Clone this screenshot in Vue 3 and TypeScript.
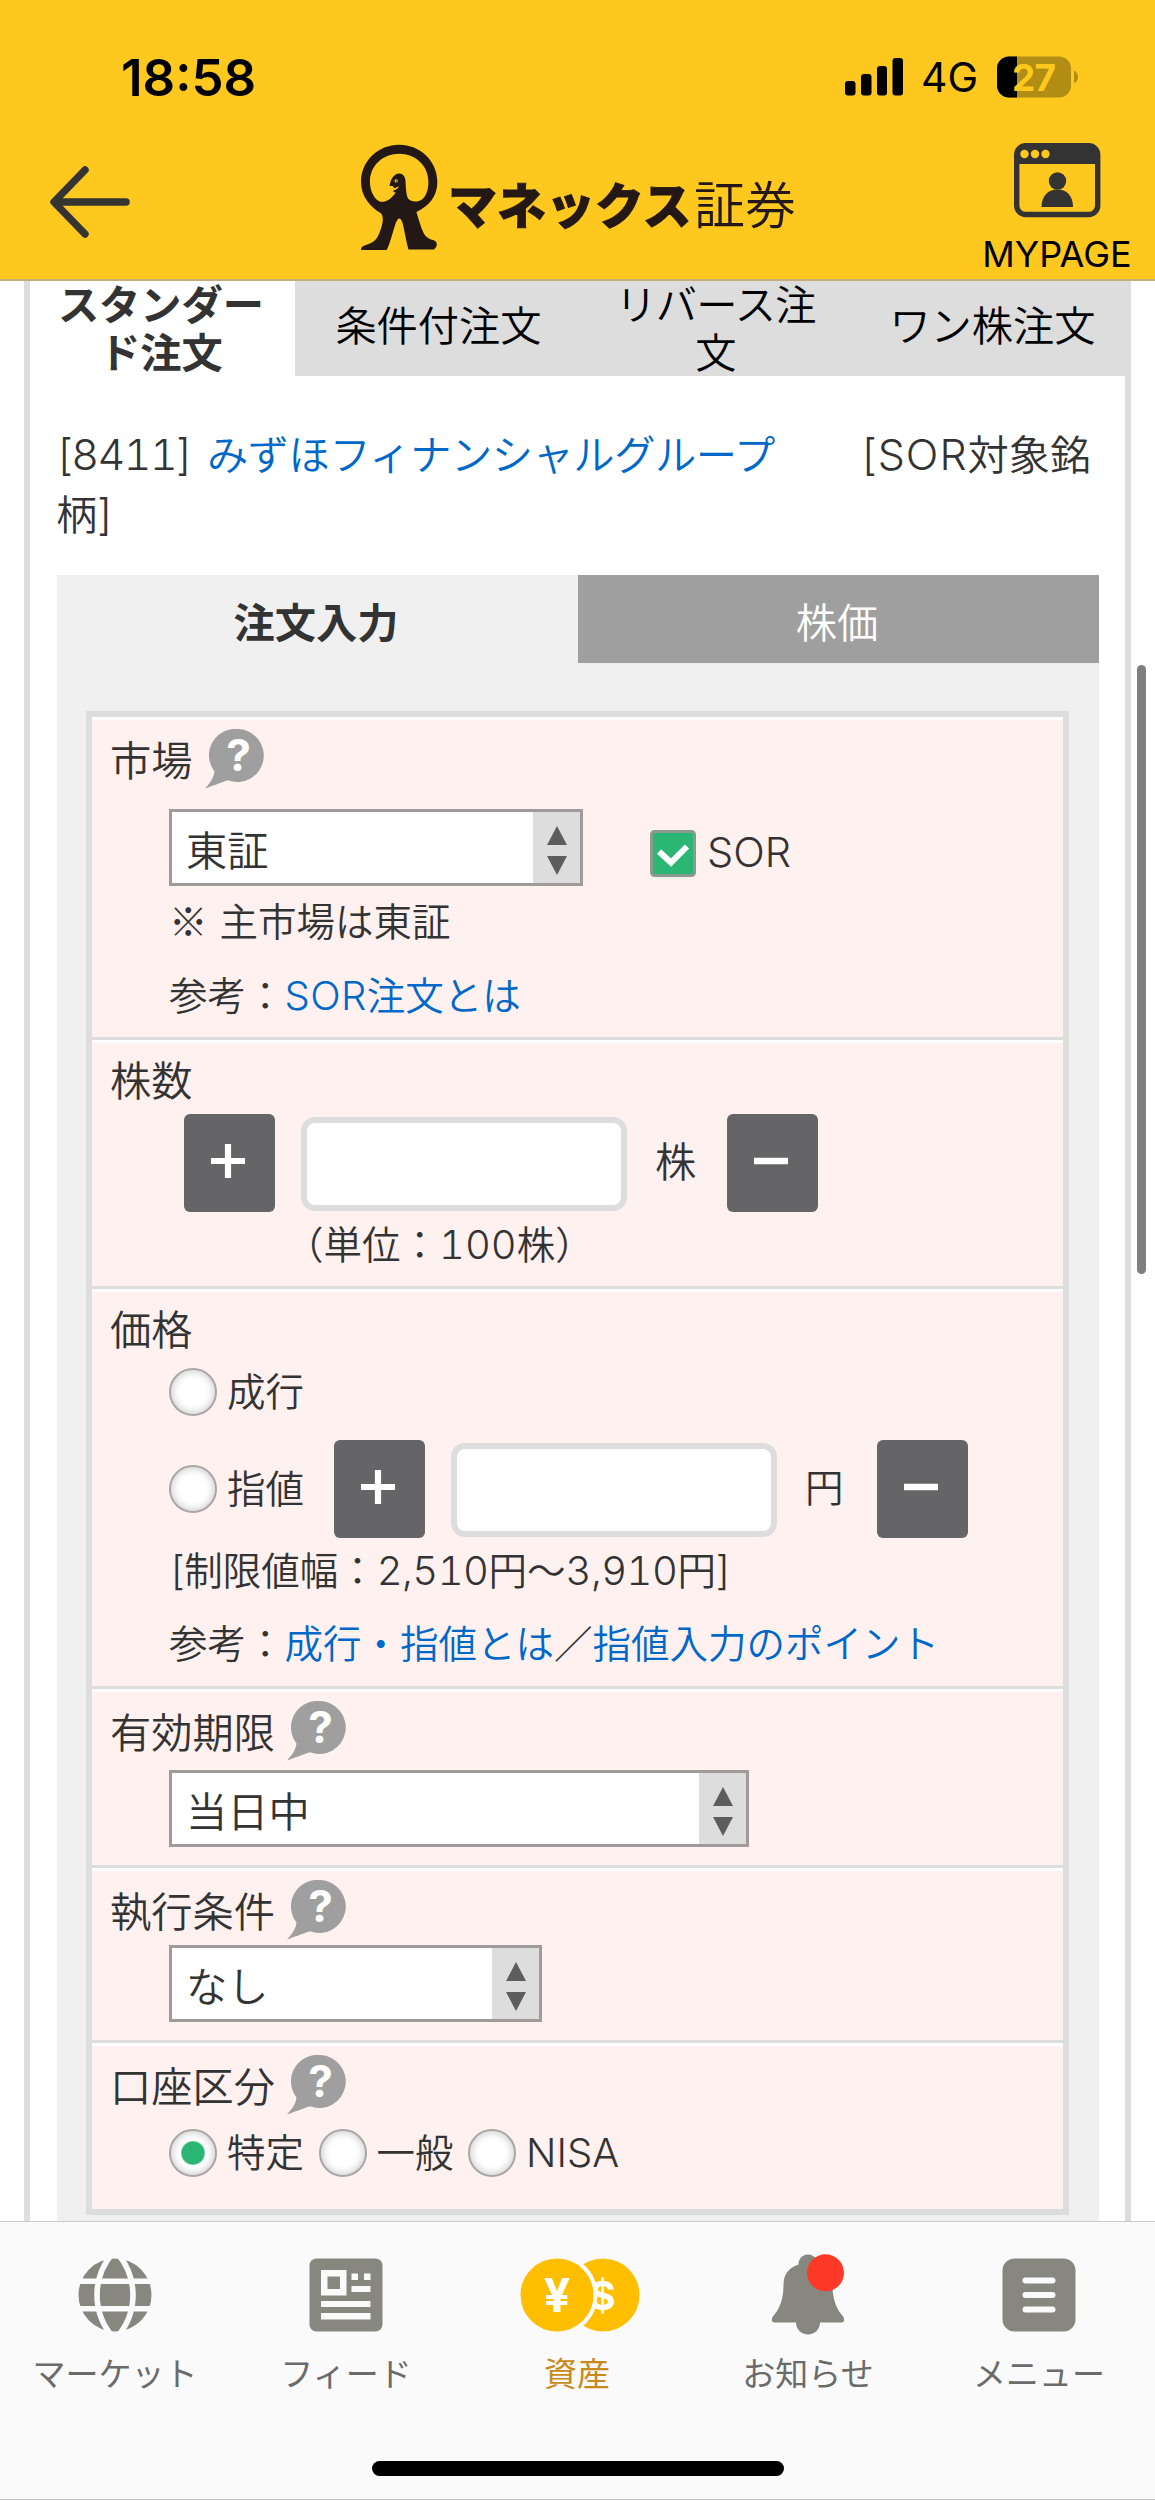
<script setup lang="ts">
import { ref, h } from 'vue'
import type { FunctionalComponent } from 'vue'

interface NavItem {
  id: string
  label: string
}

const orderTabs: string[][] = [['スタンダー', 'ド注文'], ['条件付注文'], ['リバース注', '文'], ['ワン株注文']]
const accounts: string[] = ['特定', '一般', 'NISA']
const navItems: NavItem[] = [
  { id: 'market', label: 'マーケット' },
  { id: 'feed', label: 'フィード' },
  { id: 'asset', label: '資産' },
  { id: 'notice', label: 'お知らせ' },
  { id: 'menu', label: 'メニュー' },
]

const activeTab = ref(0)
const account = ref('特定')
const activeNav = ref('asset')
const quantity = ref('')
const price = ref('')

const HelpIcon: FunctionalComponent = () =>
  h('svg', { width: 60, height: 60, viewBox: '0 0 60 60' }, [
    h('path', {
      fill: '#9f9f9f',
      d: 'M33.5 0A26.5 26.5 0 1 1 23 51.3C19 52.5 10 56 0 59.5C4 55 8.5 50 9.5 42.5A26.5 26.5 0 0 1 33.5 0Z',
    }),
    h(
      'text',
      {
        x: 33.5,
        y: 42,
        'text-anchor': 'middle',
        'font-family': 'Inter, sans-serif',
        'font-weight': 700,
        'font-size': 44,
        fill: '#fff',
      },
      '?',
    ),
  ])

const ArrowsIcon: FunctionalComponent = () =>
  h('svg', { width: 20, height: 49, viewBox: '0 0 20 49' }, [
    h('path', { d: 'M10 0L20 19H0ZM0 30H20L10 49Z', fill: '#5f5c5c' }),
  ])
</script>

<template>
  <div class="screen">
    <header class="header">
      <div class="status">
        <span class="time">18:58</span>
        <div class="status-right">
          <svg width="58" height="38" viewBox="0 0 58 38">
            <rect x="0" y="23" width="10.500" height="14.500" rx="3" />
            <rect x="16" y="16" width="10.500" height="21.500" rx="3" />
            <rect x="32" y="8" width="10" height="29.500" rx="3" />
            <rect x="47.500" y="0" width="10.500" height="37.500" rx="3" />
          </svg>
          <span class="net">4G</span>
          <svg width="82" height="42" viewBox="0 0 82 42">
            <defs>
              <clipPath id="level"><rect x="0" y="0" width="20" height="42" /></clipPath>
            </defs>
            <rect x="0" y="0.500" width="74" height="41" rx="12" fill="#b28d14" />
            <rect x="0" y="0.500" width="74" height="41" rx="12" fill="#000" clip-path="url(#level)" />
            <path d="M77 14.500Q81 17 81 21T77 27.500Z" fill="#b28d14" />
            <text x="36.500" y="34.500" text-anchor="middle" font-family="Inter, sans-serif" font-size="37" font-weight="700" letter-spacing="-1" fill="#ffc81f">27</text>
          </svg>
        </div>
      </div>
      <div class="titlebar">
        <svg class="back" width="84" height="74" viewBox="0 0 84 74">
          <path d="M37 5L6 37L37 69M7 37H78" fill="none" stroke="#343532" stroke-width="7.500" stroke-linecap="round" stroke-linejoin="round" />
        </svg>
        <div class="brand">
          <svg width="78" height="107" viewBox="60 42 235 320">
            <path
              fill="#231815"
              fill-rule="evenodd"
              d="M178 43C115 43 63 92 63 155C63 200 92 230 122 249C134 260 128 285 118 310C110 333 95 340 72 347Q63 350 63 360H140C150 345 160 300 168 278Q179 252 188 278C195 305 198 330 206 359H283Q296 348 289 335C283 329 262 330 252 310C243 292 235 262 230 246C268 226 293 200 293 155C293 92 241 43 178 43ZM178 70C226 70 266 105 266 155C266 180 258 202 243 210C230 217 212 214 205 205C199 195 198 170 197 150C195 135 186 130 176 130C160 132 152 150 149 167H158L164 174L177 168Q176 176 160 182Q159 186 168 188C160 195 152 210 135 214C118 218 108 208 102 198C94 185 90 170 90 155C90 105 130 70 178 70Z"
            />
            <circle cx="169" cy="152" r="5" fill="#ffc81f" />
            <circle cx="170" cy="153" r="2" fill="#231815" />
          </svg>
          <span class="brand-bold">マネックス</span><span class="brand-light">証券</span>
        </div>
        <div class="mypage">
          <svg width="87" height="75" viewBox="0 0 87 75">
            <rect x="2.700" y="2.700" width="81" height="68.800" rx="9" fill="none" stroke="#333" stroke-width="5.400" />
            <path d="M3 21V11Q3 3 11 3H75Q84 3 84 11V21Z" fill="#333" />
            <circle v-for="x in [10.5, 21, 31.500]" :key="x" :cx="x" cy="11" r="4.200" fill="#ffc81f" />
            <circle cx="43.500" cy="38" r="8.700" fill="#333" />
            <path d="M27.500 64C27.500 52 35 46.500 43.500 46.500S59 52 59 64Z" fill="#333" />
          </svg>
          <span>MYPAGE</span>
        </div>
      </div>
    </header>

    <main class="page">
      <div class="frame">
        <nav class="order-tabs">
          <a v-for="(lines, i) in orderTabs" :key="i" :class="{ on: i === activeTab, two: lines.length > 1 }" @click="activeTab = i">
            <span v-for="line in lines" :key="line">{{ line }}</span>
          </a>
        </nav>

        <p class="stock">
          <span class="lat code">[8411]</span><a class="name">みずほフィナンシャルグループ</a><span class="lat sor">[SOR</span>対象銘<br />柄<span class="lat">]</span>
        </p>

        <section class="panel">
          <div class="sub-tabs">
            <a class="on">注文入力</a>
            <a>株価</a>
          </div>

          <form class="box" @submit.prevent>
            <div class="row market">
              <h3 class="tall"><span>市場</span><HelpIcon class="help" /></h3>
              <div class="line first">
                <div class="select w1"><span>東証</span><i><ArrowsIcon /></i></div>
                <svg class="check" width="46" height="47" viewBox="0 0 46 47">
                  <rect x="1.500" y="1.500" width="43" height="44" rx="3" fill="#2bb673" stroke="#8a9a8f" stroke-width="3" />
                  <path d="M9 21.500L21 32.500L37 16.500" fill="none" stroke="#fff" stroke-width="6" />
                </svg>
                <span class="lat">SOR</span>
              </div>
              <p class="note">※<span class="gap"></span>主市場は東証</p>
              <p class="ref">参考：<a><span class="lat">SOR</span>注文とは</a></p>
            </div>

            <div class="row qty">
              <h3><span>株数</span></h3>
              <div class="stepper">
                <button type="button"><svg width="34" height="34" viewBox="0 0 34 34"><path d="M0 17H34M17 0V34" stroke="#fff" stroke-width="6.200" /></svg></button>
                <input v-model="quantity" type="text" />
                <span class="unit">株</span>
                <button type="button"><svg width="34" height="34" viewBox="0 0 34 34"><path d="M0 17H34" stroke="#fff" stroke-width="6.500" /></svg></button>
              </div>
              <p class="lot">（単位：<span class="lat">100</span>株）</p>
            </div>

            <div class="row price">
              <h3><span>価格</span></h3>
              <div class="line radios"><i class="radio"></i><span>成行</span></div>
              <div class="stepper">
                <i class="radio"></i><span class="limit">指値</span>
                <button type="button"><svg width="34" height="34" viewBox="0 0 34 34"><path d="M0 17H34M17 0V34" stroke="#fff" stroke-width="6.200" /></svg></button>
                <input v-model="price" type="text" />
                <span class="unit">円</span>
                <button type="button"><svg width="34" height="34" viewBox="0 0 34 34"><path d="M0 17H34" stroke="#fff" stroke-width="6.500" /></svg></button>
              </div>
              <p class="range"><span class="lat">[</span>制限値幅：<span class="lat">2,510</span>円〜<span class="lat">3,910</span>円<span class="lat">]</span></p>
              <p class="ref">参考：<a>成行・指値とは</a>／<a>指値入力のポイント</a></p>
            </div>

            <div class="row term">
              <h3 class="tall"><span>有効期限</span><HelpIcon class="help" /></h3>
              <div class="select w2"><span>当日中</span><i><ArrowsIcon /></i></div>
            </div>

            <div class="row cond">
              <h3 class="tall"><span>執行条件</span><HelpIcon class="help" /></h3>
              <div class="select w3"><span>なし</span><i><ArrowsIcon /></i></div>
            </div>

            <div class="row acct">
              <h3 class="tall"><span>口座区分</span><HelpIcon class="help" /></h3>
              <div class="line radios">
                <label v-for="a in accounts" :key="a" @click="account = a">
                  <i class="radio" :class="{ checked: a === account }"></i><span :class="{ lat: a === 'NISA' }">{{ a }}</span>
                </label>
              </div>
            </div>
          </form>
        </section>
      </div>
      <div class="scrollbar"></div>
    </main>

    <footer class="tabbar">
      <div class="nav">
        <a v-for="n in navItems" :key="n.id" :class="{ on: n.id === activeNav }" @click="activeNav = n.id">
          <svg v-if="n.id === 'market'" width="74" height="82" viewBox="0 -4 74 82">
            <circle cx="37" cy="37" r="36.500" fill="#88877f" />
            <g fill="none" stroke="#fafafa" stroke-width="5.600">
              <path d="M0 23.200H74M0 50.800H74" />
              <path d="M34 -4C14 20 14 54 34 78M40 -4C60 20 60 54 40 78" />
            </g>
          </svg>
          <svg v-else-if="n.id === 'feed'" width="74" height="82" viewBox="0 -4 74 82">
            <rect x="0.500" y="0.500" width="73" height="73" rx="7" fill="#88877f" />
            <path fill="#fafafa" fill-rule="evenodd" d="M12 12H37.500V37.500H12ZM18.500 18.500V31H31V18.500ZM42.500 15.500H49V22H42.500ZM55 15.500H61.500V22H55ZM42.500 28H61.500V34H42.500ZM12 43H61.500V49H12ZM12 55H61.500V61.500H12Z" />
          </svg>
          <svg v-else-if="n.id === 'asset'" class="coins" width="120" height="82" viewBox="0 -4 120 82">
            <circle cx="83" cy="37" r="36.500" fill="#ffbf00" />
            <text x="82.500" y="52" text-anchor="middle" font-family="Inter, sans-serif" font-weight="700" font-size="40" fill="#fff">$</text>
            <circle cx="37" cy="37" r="38.500" fill="#ffbf00" stroke="#fafafa" stroke-width="4" />
            <text x="37" y="54" text-anchor="middle" font-family="Roboto, sans-serif" font-weight="700" font-size="48" fill="#fff">¥</text>
          </svg>
          <svg v-else-if="n.id === 'notice'" width="74" height="82" viewBox="0 -4 74 82">
            <path fill="#88877f" d="M37 -3.500C30.500 -3.500 27.500 2 27.500 6.500C17 10 12.500 17 12.500 27C12.500 42 8.500 51 1.500 59Q-0.500 64.500 3.500 64.500H25C25 71.500 30.500 76.500 37 76.500S49 71.500 49 64.500H70.500Q74.500 64.500 72.500 59C65.500 51 61.500 42 61.500 27C61.500 17 57 10 46.500 6.500C46.500 2 43.500 -3.500 37 -3.500Z" />
            <circle cx="54.500" cy="14.800" r="18.500" fill="#ff3927" />
          </svg>
          <svg v-else width="74" height="82" viewBox="0 -4 74 82">
            <rect x="0.500" y="0.500" width="73" height="73" rx="12" fill="#88877f" />
            <path d="M23.500 22.500H50.500M23.500 37H50.500M23.500 51.500H50.500" stroke="#fafafa" stroke-width="6" stroke-linecap="round" />
          </svg>
          <span>{{ n.label }}</span>
        </a>
      </div>
      <div class="home"></div>
    </footer>
  </div>
</template>

<style>
body {
  margin: 0;
}
</style>

<style scoped>
* {
  box-sizing: border-box;
}
.screen {
  width: 1155px;
  height: 2500px;
  display: flex;
  flex-direction: column;
  overflow: hidden;
  background: #fff;
  color: #333;
  font-family: 'Noto Sans CJK JP', sans-serif;
  font-weight: 350;
  font-size: 41.25px;
}
svg {
  display: block;
  flex: none;
}
p,
h3 {
  margin: 0;
  font-weight: 350;
  white-space: nowrap;
}
i {
  font-style: normal;
}
.lat {
  font-family: Inter, sans-serif;
  font-size: 1.04em;
  font-weight: 300;
  line-height: 0;
  font-variant-numeric: tabular-nums;
}

/* header */
.header {
  height: 281px;
  flex: none;
  background: #ffc81f;
  border-bottom: 2px solid #c4ab7c;
  color: #000;
  font-family: Inter, sans-serif;
}
.status {
  height: 134px;
  padding: 56px 76px 0 121px;
  display: flex;
  justify-content: space-between;
}
.time {
  font-size: 51px;
  font-weight: 600;
  line-height: 43px;
}
.status-right {
  height: 42px;
  display: flex;
  align-items: center;
}
.net {
  width: 94px;
  padding-left: 18px;
  font-size: 41px;
  font-weight: 400;
  line-height: 44px;
}
.titlebar {
  height: 145px;
  padding: 0 24px 0 48px;
  display: flex;
}
.back {
  margin-top: 31px;
}
.brand {
  width: 440px;
  height: 107px;
  margin: 10px 0 0 228px;
  display: flex;
  align-items: flex-start;
  color: #231815;
  font-family: 'Noto Sans CJK JP', sans-serif;
  white-space: nowrap;
}
.brand-bold {
  margin: 33px 0 0 10px;
  width: 246px;
  font-size: 49px;
  font-weight: 900;
  line-height: 52px;
  -webkit-text-stroke: 0.8px #231815;
}
.brand-light {
  margin-top: 32px;
  font-size: 51px;
  line-height: 52px;
}
.mypage {
  width: 148px;
  margin: 9px 0 0 auto;
  display: flex;
  flex-direction: column;
  align-items: center;
  font-size: 36px;
  font-weight: 400;
  line-height: 40px;
}
.mypage span {
  margin-top: 16px;
}

/* page */
.page {
  position: relative;
  height: 1940px;
  flex: none;
  overflow: hidden;
  padding-left: 24px;
}
.frame {
  width: 1107px;
  height: 1940px;
  border: solid #ddd;
  border-width: 0 6px;
}
.order-tabs {
  height: 95px;
  margin: 0 -6px 0 0;
  display: flex;
  background: linear-gradient(90deg, #fff 265px, #ddd 265px);
  color: #000;
}
.order-tabs a {
  width: 277px;
  flex: none;
  padding-bottom: 9px;
  display: flex;
  flex-direction: column;
  align-items: center;
  justify-content: center;
  line-height: 47.500px;
  white-space: nowrap;
}
.order-tabs a.two {
  padding-bottom: 4px;
  letter-spacing: -0.800px;
}
.order-tabs a:first-child {
  width: 270px;
  padding-right: 8px;
  letter-spacing: 0;
}
.order-tabs a.on {
  color: #333;
  font-weight: 700;
}
.stock {
  height: 168px;
  padding: 46px 0 0 26px;
  line-height: 60px;
}
.code {
  display: inline-block;
  width: 151px;
  letter-spacing: -1.500px;
}
.sor {
  letter-spacing: 1px;
}
.stock .name {
  display: inline-block;
  width: 653px;
  letter-spacing: -0.450px;
}
a {
  text-decoration: none;
}
.name,
.ref a {
  color: #0068c8;
}
.panel {
  width: 1042px;
  height: 1646px;
  margin: 31px 0 0 27px;
  background: #f0f0f0;
}
.sub-tabs {
  height: 88px;
  display: flex;
}
.sub-tabs a {
  width: 521px;
  padding-right: 3px;
  text-align: center;
  line-height: 91px;
  background: #9f9f9f;
  color: #fff;
}
.sub-tabs a.on {
  background: #f0f0f0;
  color: #333;
  font-weight: 700;
}
.box {
  width: 983px;
  height: 1504px;
  margin: 48px 0 0 29px;
  border: 6px solid #ddd;
}
.row {
  padding: 9px 0 0 77px;
  background: #fef1f0;
  border-top: 3px solid #fff;
  border-bottom: 3px solid #ddd;
  font-size: 38.500px;
  line-height: 46px;
}
.market {
  height: 323px;
}
.qty {
  height: 249px;
}
.price {
  height: 400px;
}
.term {
  height: 179px;
}
.cond {
  height: 175px;
}
.acct {
  height: 166px;
  border-bottom: 0;
}
h3 {
  height: 52px;
  margin-left: -59px;
  display: flex;
  align-items: center;
  font-size: 41.250px;
}
h3.tall {
  height: 60px;
}
h3.tall span {
  margin-top: -3px;
}
.help {
  margin-left: 12px;
}
.line {
  display: flex;
  align-items: center;
}
.first {
  margin-top: 20px;
}
.select {
  height: 77px;
  display: flex;
  justify-content: space-between;
  background: #fff;
  border: 3px solid #9f9b9b;
  font-size: 41.250px;
  line-height: 72px;
}
.select span {
  padding-left: 14px;
}
.select i {
  width: 47px;
  display: flex;
  align-items: center;
  justify-content: center;
  background: #ddd;
}
.select i svg {
  margin-top: 5px;
}
.w1 {
  width: 414px;
}
.w2 {
  width: 580px;
  margin-top: 9px;
}
.w3 {
  width: 373px;
  margin-top: 5px;
}
.check {
  margin: 12px 11px 0 67px;
}
.first .lat {
  margin-top: 8px;
  font-size: 41.500px;
}
.note {
  margin-top: 10px;
}
.gap {
  display: inline-block;
  width: 12px;
}
.ref {
  margin-top: 27px;
}
.market .ref {
  margin-top: 28px;
}
.ref .lat {
  letter-spacing: 0.400px;
}
.stepper {
  height: 98px;
  display: flex;
  align-items: center;
}
.qty .stepper {
  margin: 10px 0 0 15px;
  font-size: 41.250px;
}
.price .stepper {
  margin-top: 24px;
}
button {
  width: 91px;
  height: 98px;
  padding: 0;
  border: 0;
  border-radius: 6px;
  background: #656466;
  display: flex;
  align-items: center;
  justify-content: center;
}
button svg {
  margin: -4px 4px 0 0;
}
input {
  width: 326px;
  height: 94px;
  margin: 2px 0 0 26px;
  border: 6px solid #ddd;
  border-radius: 14px;
  background: #fff;
  font-size: 40px;
  outline: none;
}
.unit {
  width: 100px;
  padding: 0 0 9px 28px;
}
.lot {
  margin: 7px 0 0 116px;
}
.radio {
  width: 48px;
  height: 48px;
  flex: none;
  border-radius: 50%;
  border: 2.500px solid #a9a5a5;
  background: #fff;
  box-shadow: inset 0 0 7px 2px #d4d4d4;
}
.radio.checked {
  background: radial-gradient(circle, #2bb673 0 11px, #fff 12.500px);
}
.radio + span {
  margin-left: 10px;
  margin-top: -6px;
}
.radio + .lat {
  margin-top: 0;
}
.price .radios {
  margin-top: 15px;
}
.limit {
  width: 107px;
}
.range {
  margin-top: 7px;
}
.range .lat {
  letter-spacing: -0.500px;
}
.range + .ref {
  margin-top: 27px;
}
.acct .radios {
  margin-top: 14px;
}
.acct label {
  width: 149.500px;
  height: 48px;
  display: flex;
  align-items: center;
}
.scrollbar {
  position: absolute;
  top: 384px;
  left: 1137px;
  width: 9px;
  height: 609px;
  border-radius: 5px;
  background: #7f7f7f;
}

/* bottom bar */
.tabbar {
  height: 279px;
  flex: none;
  background: #fafafa;
  border-top: 1.500px solid #ccc;
  border-bottom: 1px solid #c4c4c4;
  display: flex;
  flex-direction: column;
  align-items: center;
}
.nav {
  width: 1155px;
  height: 239px;
  padding-top: 32px;
  display: flex;
}
.nav a {
  width: 231px;
  padding-right: 1px;
  display: flex;
  flex-direction: column;
  align-items: center;
  color: #6b6b6b;
  font-size: 33px;
  font-weight: 400;
  line-height: 40px;
  white-space: nowrap;
}
.nav span {
  margin-top: 16px;
}
.coins {
  margin-left: 5px;
}
.nav a.on {
  color: #c98a1b;
}
.home {
  width: 412px;
  height: 15px;
  border-radius: 8px;
  background: #000;
}
</style>
